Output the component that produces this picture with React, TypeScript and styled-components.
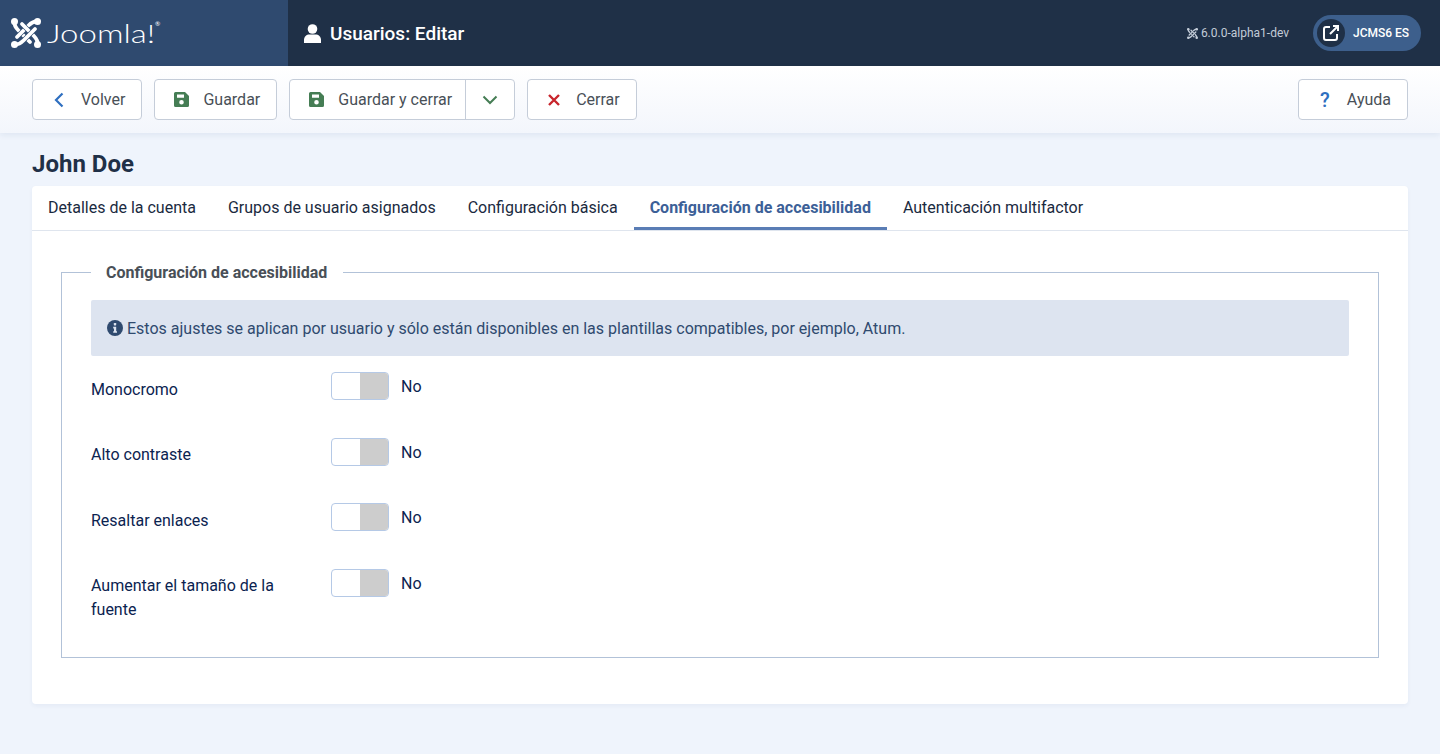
import React, { FC, ReactNode } from 'react';
import styled, { createGlobalStyle } from 'styled-components';

const GlobalStyle = createGlobalStyle`
  html, body {
    margin: 0;
    padding: 0;
    background: #eff4fc;
    font-family: Roboto, "Liberation Sans", sans-serif;
    font-size: 16px;
    color: #1c3050;
  }
  * {
    box-sizing: border-box;
  }
`;

const Page = styled.div`
  height: 754px;
  overflow: hidden;
`;

const Header = styled.header`
  display: flex;
  align-items: stretch;
  height: 66px;
  background: #1f3047;
  color: #ffffff;
`;

const Brand = styled.div`
  display: flex;
  align-items: center;
  gap: 6px;
  width: 288px;
  padding-left: 11px;
  background: #2f4a6f;
`;

const BrandName = styled.span`
  position: relative;
  display: inline-block;
  font-family: Lato, sans-serif;
  font-weight: 300;
  font-size: 26px;
  line-height: 26px;
  color: #ffffff;
  transform: scaleX(1.27);
  transform-origin: left center;
`;

const Registered = styled.span`
  position: absolute;
  top: 2px;
  right: -4px;
  font-size: 5px;
  line-height: 5px;
  font-weight: 400;
`;

const PageTitle = styled.h1`
  display: flex;
  align-items: center;
  gap: 9px;
  margin: 0;
  padding-left: 16px;
  font-size: 19px;
  font-weight: 500;
  color: #ffffff;
`;

const HeaderRight = styled.div`
  display: flex;
  align-items: center;
  margin-left: auto;
  padding-right: 19px;
`;

const Version = styled.div`
  display: flex;
  align-items: center;
  gap: 3px;
  margin-right: 24px;
  font-size: 12px;
  color: #c3ccd8;
`;

const SitePill = styled.div`
  display: flex;
  align-items: center;
  gap: 8px;
  width: 108px;
  height: 36px;
  padding-left: 4px;
  border-radius: 18px;
  background: #3d5f8c;
  font-size: 12px;
  font-weight: 500;
  color: #ffffff;
`;

const PillIcon = styled.span`
  display: flex;
  align-items: center;
  justify-content: center;
  width: 28px;
  height: 28px;
  border-radius: 50%;
  background: #1f3047;
`;

const Toolbar = styled.div`
  position: relative;
  display: flex;
  align-items: center;
  gap: 12px;
  height: 67px;
  padding: 0 32px;
  background: linear-gradient(180deg, #ffffff 0%, #f3f6fc 100%);
  box-shadow: 0 2px 6px rgba(30, 60, 110, 0.08);
`;

const Button = styled.div<{ $alignEnd?: boolean }>`
  display: flex;
  align-items: center;
  height: 41px;
  margin-left: ${({ $alignEnd }) => ($alignEnd ? 'auto' : '0')};
  border: 1px solid #c5cdd9;
  border-radius: 4px;
  background: #ffffff;
  font-size: 16px;
  color: #495057;
`;

const ButtonMain = styled.span<{ $split?: boolean }>`
  display: flex;
  align-items: center;
  height: 100%;
  padding: ${({ $split }) => ($split ? '0 13px 0 16px' : '0 16px')};
`;

const ButtonIcon = styled.span`
  display: flex;
  align-items: center;
  justify-content: center;
  width: 20px;
  margin-right: 12px;
`;

const ButtonCaret = styled.span`
  display: flex;
  align-items: center;
  justify-content: center;
  width: 49px;
  height: 100%;
  border-left: 1px solid #c5cdd9;
`;

const Content = styled.main`
  padding: 0 32px;
`;

const Heading = styled.h2`
  margin: 0;
  padding-top: 17px;
  height: 53px;
  font-size: 24px;
  line-height: 28px;
  font-weight: 700;
  color: #1f3047;
`;

const Card = styled.section`
  height: 518px;
  border-radius: 4px;
  background: #ffffff;
  box-shadow: 0 2px 4px rgba(30, 60, 110, 0.05);
`;

const Tabs = styled.nav`
  display: flex;
  height: 45px;
  border-bottom: 1px solid #dfe5ee;
`;

const Tab = styled.div<{ $active?: boolean }>`
  display: flex;
  align-items: center;
  height: 44px;
  padding: 0 16px 2px;
  font-weight: ${({ $active }) => ($active ? 700 : 400)};
  color: ${({ $active }) => ($active ? '#3c6097' : '#1a2a40')};
  box-shadow: ${({ $active }) => ($active ? 'inset 0 -3px 0 #5a7db5' : 'none')};
`;

const Panel = styled.div`
  padding: 28px 29px 0;
`;

const Fieldset = styled.fieldset`
  height: 399px;
  margin: 0;
  padding: 15px 29px 0;
  border: 1px solid #b2c2d8;
`;

const Legend = styled.legend`
  padding: 2px 16px 0 15px;
  font-size: 16px;
  line-height: 24px;
  font-weight: 700;
  color: #495057;
`;

const Alert = styled.div`
  display: flex;
  align-items: center;
  gap: 4px;
  height: 56px;
  margin-bottom: 16px;
  padding-left: 16px;
  border-radius: 2px;
  background: #dde4f0;
  color: #2f4a6f;
`;

const Row = styled.div`
  display: grid;
  grid-template-columns: 240px 1fr;
  height: 65.5px;
`;

const Label = styled.div`
  padding-top: 5.9px;
  max-width: 200px;
  line-height: 24px;
  color: #0b2350;
`;

const Control = styled.div`
  display: flex;
  align-items: flex-start;
  gap: 12px;
`;

const Switch = styled.div`
  display: flex;
  width: 58px;
  height: 28px;
  overflow: hidden;
  border: 1px solid #b5c9e6;
  border-radius: 4px;
  background: #ffffff;
`;

const SwitchHandle = styled.span`
  width: 28px;
  margin-left: auto;
  background: #cdcdcd;
`;

const SwitchValue = styled.span`
  line-height: 29px;
  color: #0b2350;
`;

const JoomlaMark: FC<{ size: number; color: string; gap: string }> = ({ size, color, gap }) => (
  <svg width={size} height={size} viewBox="0 0 30 30" fill="none">
    {[0, 90, 180, 270].map((angle) => (
      <g key={angle} transform={`rotate(${angle} 15 15)`}>
        <path d="M7.500 12.500 L19 24" stroke={gap} strokeWidth="5" />
        <path d="M3.500 3.500 C3 7 5 10 7.500 12.500 L19 24" stroke={color} strokeWidth="3.800" strokeLinecap="round" />
        <circle cx="3.500" cy="3.500" r="3.500" fill={color} />
      </g>
    ))}
  </svg>
);

const UserIcon = () => (
  <svg width="17" height="19" viewBox="0 0 17 19" fill="#ffffff">
    <circle cx="8.500" cy="5" r="4.800" />
    <path d="M0 19 v-3 C0 12.500 2.500 10.500 5.500 10.500 h6 c3 0 5.500 2 5.500 5.500 V19 Z" />
  </svg>
);

const ChevronLeft = () => (
  <svg width="10" height="16" viewBox="0 0 10 16" fill="none" stroke="#2f6fc0" strokeWidth="2.200">
    <path d="M8.500 1.500 L2 8 L8.500 14.500" />
  </svg>
);

const ChevronDown = () => (
  <svg width="16" height="12" viewBox="0 0 16 12" fill="none" stroke="#457d54" strokeWidth="2">
    <path d="M1.500 2.500 L8 9 L14.500 2.500" />
  </svg>
);

const SaveIcon = () => (
  <svg width="15" height="15" viewBox="0 0 15 15">
    <path
      fill="#457d54"
      fillRule="evenodd"
      d="M1.500 0 H11 L15 4 V13.500 A1.500 1.500 0 0 1 13.500 15 H1.500 A1.500 1.500 0 0 1 0 13.500 V1.500 A1.500 1.500 0 0 1 1.500 0 Z M3 2.500 V5.800 H10 V2.500 Z M7.500 8 A2.300 2.300 0 1 0 7.500 12.600 A2.300 2.300 0 1 0 7.500 8 Z"
    />
  </svg>
);

const CloseIcon = () => (
  <svg width="14" height="14" viewBox="0 0 14 14" fill="none" stroke="#c8252c" strokeWidth="2.400">
    <path d="M2 2 L12 12 M12 2 L2 12" />
  </svg>
);

const HelpIcon = styled.span`
  font-size: 20px;
  font-weight: 500;
  color: #2f6fc0;
`;

const ExternalIcon = () => (
  <svg width="18" height="18" viewBox="0 0 18 18" fill="none" stroke="#ffffff" strokeWidth="2">
    <path d="M8 3 H4 A2 2 0 0 0 2 5 V14 A2 2 0 0 0 4 16 H13 A2 2 0 0 0 15 14 V10" />
    <path d="M11 2 H16 V7 M16 2 L8 10" />
  </svg>
);

const InfoIcon = () => (
  <svg width="16" height="16" viewBox="0 0 16 16">
    <circle cx="8" cy="8" r="8" fill="#2f4a6f" />
    <rect x="6.800" y="3" width="2.400" height="2.400" rx="0.6" fill="#dde4f0" />
    <path d="M6.200 6.800 H9.200 V11.200 H10 V12.800 H6.200 V11.200 H7 V8.400 H6.200 Z" fill="#dde4f0" />
  </svg>
);

type ToolButtonProps = {
  icon: ReactNode;
  text: string;
  caret?: boolean;
  alignEnd?: boolean;
};

const ToolButton: FC<ToolButtonProps> = ({ icon, text, caret, alignEnd }) => (
  <Button $alignEnd={alignEnd}>
    <ButtonMain $split={caret}>
      <ButtonIcon>{icon}</ButtonIcon>
      {text}
    </ButtonMain>
    {caret && (
      <ButtonCaret>
        <ChevronDown />
      </ButtonCaret>
    )}
  </Button>
);

const tabs = [
  'Detalles de la cuenta',
  'Grupos de usuario asignados',
  'Configuración básica',
  'Configuración de accesibilidad',
  'Autenticación multifactor'
];

const options = ['Monocromo', 'Alto contraste', 'Resaltar enlaces', 'Aumentar el tamaño de la fuente'];

export default function App() {
  return (
    <Page>
      <GlobalStyle />
      <Header>
        <Brand>
          <JoomlaMark size={30} color="#ffffff" gap="#2f4a6f" />
          <BrandName>
            Joomla!
            <Registered>®</Registered>
          </BrandName>
        </Brand>
        <PageTitle>
          <UserIcon />
          Usuarios: Editar
        </PageTitle>
        <HeaderRight>
          <Version>
            <JoomlaMark size={11} color="#c3ccd8" gap="#1f3047" />
            6.0.0-alpha1-dev
          </Version>
          <SitePill>
            <PillIcon>
              <ExternalIcon />
            </PillIcon>
            JCMS6 ES
          </SitePill>
        </HeaderRight>
      </Header>
      <Toolbar>
        <ToolButton icon={<ChevronLeft />} text="Volver" />
        <ToolButton icon={<SaveIcon />} text="Guardar" />
        <ToolButton icon={<SaveIcon />} text="Guardar y cerrar" caret />
        <ToolButton icon={<CloseIcon />} text="Cerrar" />
        <ToolButton icon={<HelpIcon>?</HelpIcon>} text="Ayuda" alignEnd />
      </Toolbar>
      <Content>
        <Heading>John Doe</Heading>
        <Card>
          <Tabs>
            {tabs.map((tab, i) => (
              <Tab key={tab} $active={i === 3}>
                {tab}
              </Tab>
            ))}
          </Tabs>
          <Panel>
            <Fieldset>
              <Legend>Configuración de accesibilidad</Legend>
              <Alert>
                <InfoIcon />
                Estos ajustes se aplican por usuario y sólo están disponibles en las plantillas compatibles, por
                ejemplo, Atum.
              </Alert>
              {options.map((option) => (
                <Row key={option}>
                  <Label>{option}</Label>
                  <Control>
                    <Switch>
                      <SwitchHandle />
                    </Switch>
                    <SwitchValue>No</SwitchValue>
                  </Control>
                </Row>
              ))}
            </Fieldset>
          </Panel>
        </Card>
      </Content>
    </Page>
  );
}
